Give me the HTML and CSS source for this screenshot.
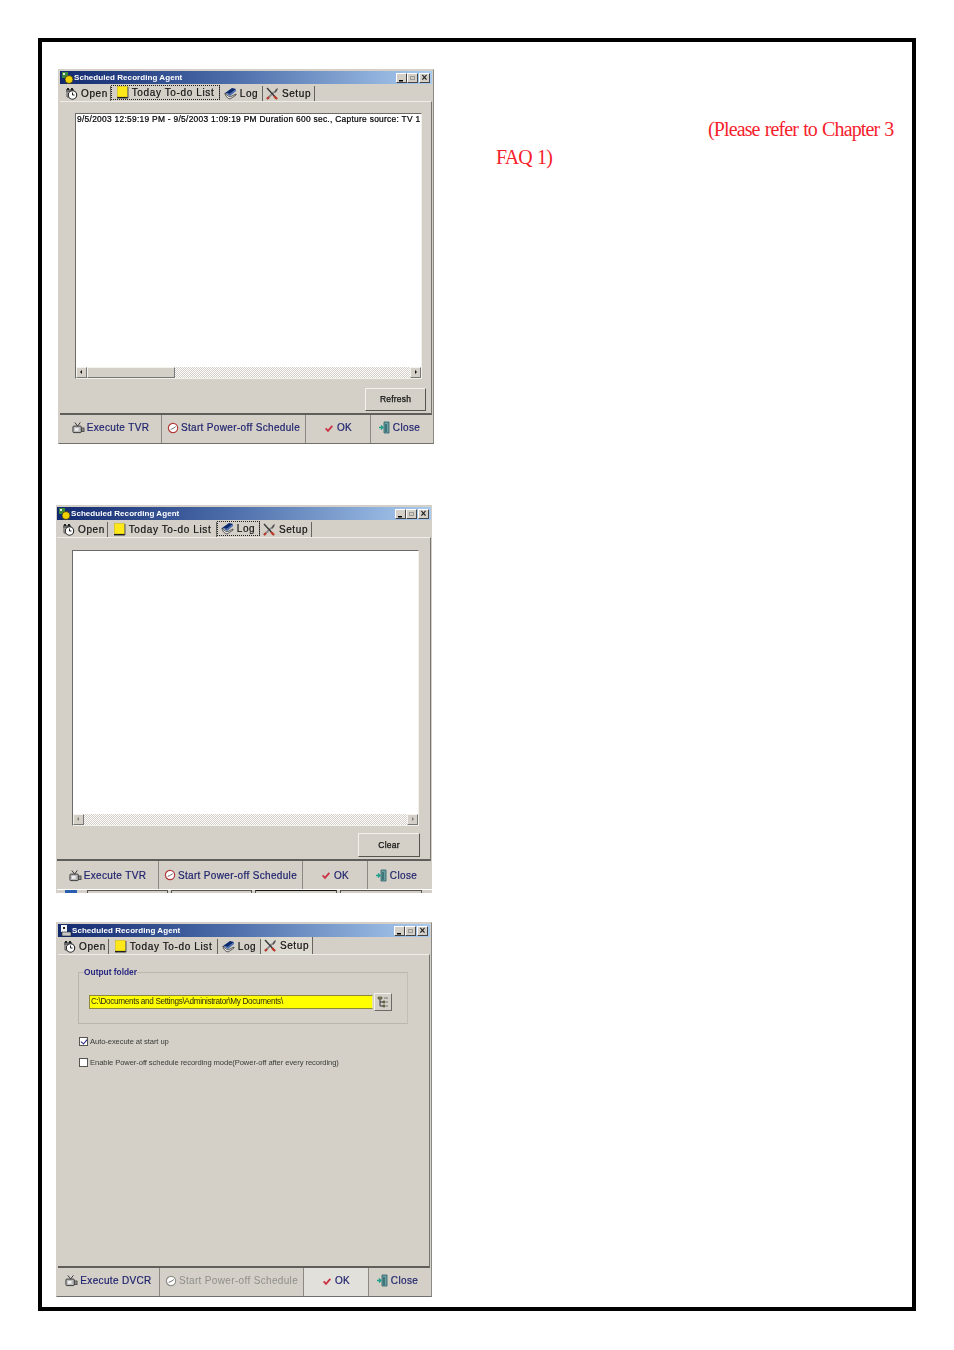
FILE: index.html
```html
<!DOCTYPE html>
<html lang="en">
<head>
<meta charset="utf-8">
<title>Scheduled Recording Agent</title>
<link rel="stylesheet" href="styles.css">
</head>
<body>
<svg class="defs" width="0" height="0" aria-hidden="true">
  <symbol id="i-open" viewBox="0 0 13 13">
    <rect x="1" y="2" width="8" height="3" fill="#6b6b6b"/>
    <path d="M2 1h2v2H2zM6 1h2v2H6z" fill="#222"/>
    <circle cx="7.5" cy="8" r="4.2" fill="#fff" stroke="#222" stroke-width="1.1"/>
    <path d="M7.5 5.5V8h2" fill="none" stroke="#222"/>
    <path d="M2 5v5h2" fill="none" stroke="#555"/>
  </symbol>
  <symbol id="i-todo" viewBox="0 0 13 13">
    <rect x="1.5" y="0.5" width="10" height="10.5" fill="#ffe81a" stroke="#c8b400" stroke-width=".5"/>
    <path d="M1 11.7h11" stroke="#222" stroke-width="1.5"/>
    <path d="M12 1v11" stroke="#555"/>
  </symbol>
  <symbol id="i-log" viewBox="0 0 13 13">
    <path d="M1 6 8 1l4 1-6 5z" fill="#0b2a6e"/>
    <path d="M1 6l5 1 6-5v2L6 9z" fill="#4a6cb0"/>
    <path d="M1 6c0 3 2 5 5 6l6-4v-1l-6 3C4 9 2 8 1 6z" fill="#fff" stroke="#333" stroke-width=".8"/>
  </symbol>
  <symbol id="i-setup" viewBox="0 0 13 13">
    <path d="M1 12 8 5" stroke="#8d8d8d" stroke-width="2"/>
    <path d="M8 5l2-3 2-1-1 3-2 2z" fill="#555"/>
    <path d="M1 1l10 11" stroke="#333" stroke-width="1.3"/>
    <path d="M8 9l3 3" stroke="#c0392b" stroke-width="2.2"/>
    <path d="M1 12l2-2" stroke="#c0392b" stroke-width="2.2"/>
  </symbol>
  <symbol id="i-exec" viewBox="0 0 14 13">
    <rect x="1" y="5" width="9" height="7" rx="1" fill="#bbb" stroke="#333"/>
    <rect x="10" y="7" width="3" height="4" fill="#888" stroke="#333" stroke-width=".7"/>
    <path d="M3 1l3 4 3-4" fill="none" stroke="#333"/>
    <path d="M3 7h4v3H3z" fill="#eee"/>
  </symbol>
  <symbol id="i-clock" viewBox="0 0 13 13">
    <circle cx="6.5" cy="6.5" r="5" fill="#fff" stroke="currentColor" stroke-width="1.3"/>
    <path d="M6.5 7 9.5 5M6.5 7 4 8" fill="none" stroke="#666"/>
  </symbol>
  <symbol id="i-ok" viewBox="0 0 12 12">
    <path d="M2 6.5 4.8 9.5 10 3.5" fill="none" stroke="#cc3344" stroke-width="2.2"/>
  </symbol>
  <symbol id="i-close" viewBox="0 0 13 13">
    <path d="M6 1h5v11H6z" fill="#6aa0a0" stroke="#2b5e6b" stroke-width=".8"/>
    <path d="M8 3v8" stroke="#174a55"/>
    <path d="M1 6.5h4M3 4.5 5 6.5 3 8.5" fill="none" stroke="#1fa08c" stroke-width="1.3"/>
  </symbol>
  <symbol id="i-tree" viewBox="0 0 12 12">
    <path d="M3 3v7h3M3 6h3" fill="none" stroke="#333"/>
    <path d="M1 1h4v2H1zM6 5h2v2H6zM6 9h2v2H6z" fill="#8a8a50" stroke="#333" stroke-width=".5"/>
    <path d="M7 2h4M9 6h2M9 10h2" stroke="#777"/>
  </symbol>
  <symbol id="i-app" viewBox="0 0 12 12">
    <rect x="0" y="0" width="6" height="6" fill="#3a8a3a"/>
    <rect x="1" y="1" width="2" height="2" fill="#e5e5e5"/>
    <circle cx="7" cy="7.5" r="4" fill="#f0d000" stroke="#222" stroke-width=".7"/>
  </symbol>
  <symbol id="i-app2" viewBox="0 0 12 12">
    <rect x="1" y="0" width="6" height="7" fill="#f4f4f4"/>
    <rect x="3" y="2" width="2" height="2" fill="#222"/>
    <rect x="2" y="7" width="9" height="4" fill="#c8c8c8" stroke="#222" stroke-width=".6"/>
  </symbol>
</svg>

<main class="page">
  <div class="shots">
    <section class="window win-todo">
      <header class="title"><svg class="app-icon"><use href="#i-app"/></svg><span class="title-text">Scheduled Recording Agent</span><span class="caps"><i class="cap cap-min"></i><i class="cap cap-max"></i><i class="cap cap-x">×</i></span></header>
      <nav class="tabs">
        <span class="tab tab-open"><svg class="ico"><use href="#i-open"/></svg>Open</span>
        <span class="tab tab-todo is-active"><svg class="ico"><use href="#i-todo"/></svg>Today To-do List</span>
        <span class="tab tab-log"><svg class="ico"><use href="#i-log"/></svg>Log</span>
        <span class="tab tab-setup"><svg class="ico"><use href="#i-setup"/></svg>Setup</span>
      </nav>
      <div class="panel">
        <div class="list">
          <div class="list-body"><span class="row">9/5/2003 12:59:19 PM - 9/5/2003 1:09:19 PM Duration 600 sec., Capture source: TV 1</span></div>
          <div class="hscroll"><b class="arrow arrow-l"></b><b class="thumb"></b><b class="track"></b><b class="arrow arrow-r"></b></div>
        </div>
        <button class="action">Refresh</button>
      </div>
      <footer class="bar">
        <span class="bar-btn b-exec"><svg class="ico"><use href="#i-exec"/></svg>Execute TVR</span>
        <span class="bar-btn b-start"><svg class="ico clock"><use href="#i-clock"/></svg>Start Power-off Schedule</span>
        <span class="bar-btn b-ok"><svg class="ico-ok"><use href="#i-ok"/></svg>OK</span>
        <span class="bar-btn b-close"><svg class="ico"><use href="#i-close"/></svg>Close</span>
      </footer>
    </section>

    <section class="window win-log">
      <header class="title"><svg class="app-icon"><use href="#i-app"/></svg><span class="title-text">Scheduled Recording Agent</span><span class="caps"><i class="cap cap-min"></i><i class="cap cap-max"></i><i class="cap cap-x">×</i></span></header>
      <nav class="tabs">
        <span class="tab tab-open"><svg class="ico"><use href="#i-open"/></svg>Open</span>
        <span class="tab tab-todo"><svg class="ico"><use href="#i-todo"/></svg>Today To-do List</span>
        <span class="tab tab-log is-active"><svg class="ico"><use href="#i-log"/></svg>Log</span>
        <span class="tab tab-setup"><svg class="ico"><use href="#i-setup"/></svg>Setup</span>
      </nav>
      <div class="panel">
        <div class="list">
          <div class="list-body"></div>
          <div class="hscroll is-empty"><b class="arrow arrow-l"></b><b class="track"></b><b class="arrow arrow-r"></b></div>
        </div>
        <button class="action">Clear</button>
      </div>
      <footer class="bar">
        <span class="bar-btn b-exec"><svg class="ico"><use href="#i-exec"/></svg>Execute TVR</span>
        <span class="bar-btn b-start"><svg class="ico clock"><use href="#i-clock"/></svg>Start Power-off Schedule</span>
        <span class="bar-btn b-ok"><svg class="ico-ok"><use href="#i-ok"/></svg>OK</span>
        <span class="bar-btn b-close"><svg class="ico"><use href="#i-close"/></svg>Close</span>
      </footer>
      <div class="taskbar"><i class="start"></i><i class="task t1"></i><i class="task t2"></i><i class="task t3"></i><i class="task t4"></i></div>
    </section>

    <section class="window win-setup">
      <header class="title"><svg class="app-icon"><use href="#i-app2"/></svg><span class="title-text">Scheduled Recording Agent</span><span class="caps"><i class="cap cap-min"></i><i class="cap cap-max"></i><i class="cap cap-x">×</i></span></header>
      <nav class="tabs">
        <span class="tab tab-open"><svg class="ico"><use href="#i-open"/></svg>Open</span>
        <span class="tab tab-todo"><svg class="ico"><use href="#i-todo"/></svg>Today To-do List</span>
        <span class="tab tab-log"><svg class="ico"><use href="#i-log"/></svg>Log</span>
        <span class="tab tab-setup is-open"><svg class="ico"><use href="#i-setup"/></svg>Setup</span>
      </nav>
      <div class="panel panel-setup">
        <fieldset class="group">
          <legend class="group-label">Output folder</legend>
          <div class="path-row">
            <span class="path">C:\Documents and Settings\Administrator\My Documents\</span>
            <span class="browse"><svg class="tree"><use href="#i-tree"/></svg></span>
          </div>
        </fieldset>
        <div class="check check-1"><i class="box is-checked"></i>Auto-execute at start up</div>
        <div class="check check-2"><i class="box"></i>Enable Power-off schedule recording mode(Power-off after every recording)</div>
      </div>
      <footer class="bar">
        <span class="bar-btn b-exec"><svg class="ico"><use href="#i-exec"/></svg>Execute DVCR</span>
        <span class="bar-btn b-start is-disabled"><svg class="ico clock"><use href="#i-clock"/></svg>Start Power-off Schedule</span>
        <span class="bar-btn b-ok is-hot"><svg class="ico-ok"><use href="#i-ok"/></svg>OK</span>
        <span class="bar-btn b-close"><svg class="ico"><use href="#i-close"/></svg>Close</span>
      </footer>
    </section>
  </div>
  <p class="note">(Please refer to Chapter 3 FAQ 1)</p>
</main>
</body>
</html>
```
FILE: styles.css
```css
* { box-sizing: border-box; }
html, body { margin: 0; background: #fff; }
body { width: 954px; height: 1350px; padding: 38px 38px 0; }
.defs { position: absolute; }

.page {
  width: 878px;
  height: 1273px;
  border: 4px solid #000;
  display: flex;
  background: #fff;
}
.shots { width: 454px; flex: none; display: flex; flex-direction: column; }
.note {
  margin: 73px 0 0;
  width: 402px;
  font: 20px/28px "Liberation Serif", serif;
  letter-spacing: -.88px;
  word-spacing: 1px;
  color: #f5222d;
  text-indent: 212px;
}

/* Window shell */
.window {
  width: 376px;
  height: 375px;
  display: flex;
  flex-direction: column;
  background: #d4d0c8;
  border: 1px solid #d4d0c8;
  border-right-color: #8a8a86;
  border-bottom-color: #6f6f6c;
  padding: 1px 0 0 1px;
  font-family: "Liberation Sans", sans-serif;
  filter: blur(.35px);
}
.win-todo { margin: 27px 0 0 16px; }
.win-log { margin: 61px 0 0 14px; height: 388px; border: 0; padding: 2px 0 0 1px; }
.win-setup { margin: 29px 0 0 14px; }

.title {
  height: 13px;
  flex: none;
  display: flex;
  align-items: center;
  padding-left: 2px;
  margin-right: 1px;
  background: linear-gradient(90deg, #13296f 0%, #4a6ba8 45%, #a9cbef 100%);
  color: #fff;
}
.app-icon { width: 12px; height: 12px; flex: none; }
.title-text { font-size: 8px; font-weight: 700; letter-spacing: .06px; white-space: nowrap; }
.caps { margin-left: auto; display: flex; gap: 0; padding-right: 2px; }
.cap {
  width: 11px; height: 10px; margin-left: 1px;
  background: #d4d0c8; border: 1px solid; border-color: #fff #444 #444 #fff;
  font: 700 10px/7px "Liberation Sans", sans-serif; color: #222; text-align: center; position: relative;
}
.cap-min { background: linear-gradient(#000, #000) 2px 6px / 4px 1.5px no-repeat #d4d0c8; }
.cap-max { background: #d4d0c8; box-shadow: inset 0 0 0 2px #d4d0c8, inset 0 0 0 3px #9a9a96; margin-left: 0; }

/* Tabs */
.tabs {
  height: 17px;
  flex: none;
  display: flex;
  align-items: center;
  padding: 1px 0 0 3px;
  font-size: 10px;
  letter-spacing: .62px;
  color: #111;
  -webkit-text-stroke: .2px #111;
}
.tab {
  height: 15px;
  display: flex;
  align-items: center;
  justify-content: center;
  gap: 3px;
  border-right: 1px solid #66645f;
  white-space: nowrap;
}
.tab-open { width: 48px; }
.tab-todo { width: 109px; }
.tab-log { width: 43px; }
.tab-setup { width: 52px; }
.tab.is-active {
  outline: 1px dotted #222;
  outline-offset: -1px;
  margin-top: -1px;
  border-right: 1px solid #66645f;
}
.tab.is-open { background: #dcd9d1; margin-top: -2px; height: 17px; }
.ico { width: 13px; height: 13px; flex: none; }
.ico-ok { width: 10px; height: 10px; flex: none; }

/* Panel */
.panel {
  flex: 1;
  display: flex;
  flex-direction: column;
  align-items: flex-end;
  min-height: 0;
  border-top: 1px solid #efede7;
  border-right: 1px solid #77756f;
  border-bottom: 2px solid #5f5e5a;
  margin-right: 1px;
  padding: 11px 5px 0 15px;
}
.list {
  align-self: flex-start;
  width: 347px;
  height: 266px;
  display: flex;
  flex-direction: column;
  border: 1px solid #6c6a66;
  border-right-color: #f2f0ea;
  border-bottom-color: #f2f0ea;
  background: #fff;
}
.list-body { flex: 1; min-height: 0; overflow: hidden; padding: 0 0 0 1px; }
.row {
  display: block;
  white-space: nowrap;
  font-size: 8.4px;
  line-height: 11px;
  font-weight: 400;
  letter-spacing: .29px;
  color: #000;
  -webkit-text-stroke: .22px #000;
}
.hscroll { height: 11px; flex: none; display: flex; background: #d4d0c8; }
.arrow {
  width: 11px; flex: none; position: relative;
  background: #d4d0c8;
  border: 1px solid; border-color: #f5f3ee #777 #777 #f5f3ee;
}
.arrow::after {
  content: "";
  position: absolute; top: 2px; left: 3px;
  border: 2.5px solid transparent;
}
.arrow-l::after { border-right-color: #111; border-left: 0; }
.arrow-r::after { border-left-color: #111; border-right: 0; left: 4px; }
.is-empty .arrow::after { opacity: .45; }
.thumb { width: 88px; flex: none; background: #d4d0c8; border: 1px solid; border-color: #f5f3ee #777 #777 #f5f3ee; }
.track {
  flex: 1;
  background: repeating-conic-gradient(#d4d0c8 0 25%, #fff 0 50%) 0 0 / 2px 2px;
}
.action {
  margin-top: 9px;
  width: 61px;
  height: 23px;
  padding: 0 0 1px;
  background: #d4d0c8;
  border: 1px solid;
  border-color: #f4f2ec #55544f #55544f #f4f2ec;
  font: 8.5px "Liberation Sans", sans-serif;
  letter-spacing: .2px;
  -webkit-text-stroke: .25px #111;
  color: #111;
}
.win-log .panel { padding-top: 12px; padding-left: 15px; }
.win-log .list { height: 276px; }
.win-log .action { margin-top: 7px; width: 62px; height: 24px; margin-right: 5px; padding-bottom: 0; }

/* Toolbar */
.bar {
  height: 28px;
  flex: none;
  display: flex;
  font-size: 10px;
  letter-spacing: .34px;
  color: #20246e;
  -webkit-text-stroke: .2px #20246e;
}
.bar-btn {
  display: flex;
  align-items: center;
  justify-content: center;
  gap: 2px;
  white-space: nowrap;
  border-right: 1px solid #8a8984;
  height: 100%;
  padding-bottom: 3px;
}
.win-log .bar-btn { padding-bottom: 0; }
.b-exec { width: 102px; }
.b-start { width: 144px; }
.b-ok { width: 65px; gap: 3px; }
.b-close { width: 62px; border-right: 0; padding-right: 6px; }
.clock { color: #b03a3a; width: 12px; height: 12px; }
.is-disabled { color: #8f8e89; -webkit-text-stroke: 0; }
.is-disabled .clock { color: #8f8e89; }
.is-hot { background: #e2e0da; }

.taskbar {
  height: 4px;
  flex: none;
  display: flex;
  gap: 3px;
  padding-left: 8px;
  background: #d4d0c8;
  border-top: 1px solid #fff;
}
.start { display: block; width: 12px; height: 3px; background: #2a5fb0; margin-right: 7px; }
.task { display: block; height: 3px; border: 1px solid #55544f; border-bottom: 0; }
.t1 { width: 81px; }
.t2 { width: 81px; }
.t3 { width: 82px; border-top-color: #111; }
.t4 { width: 82px; }

/* Setup */
.panel-setup { display: block; padding: 12px 0 0 20px; }
.group {
  width: 330px;
  height: 57px;
  margin: 0;
  min-width: 0;
  padding: 16px 14px 0 10px;
  border: 1px solid #b9b6ae;
  border-right-color: #c2bfb7;
}
.group-label {
  padding: 0;
  margin-left: -5px;
  font-size: 8.4px;
  line-height: 11px;
  font-weight: 700;
  color: #27277e;
}
.path-row { display: flex; align-items: center; gap: 1px; margin-top: -1px; }
.path {
  width: 284px;
  height: 14px;
  background: #ffff00;
  border: 1px solid #8c8a3a;
  border-right-color: #e6e6a0;
  font-size: 8.2px;
  line-height: 12px;
  letter-spacing: -.33px;
  padding-left: 1px;
  color: #2c2c10;
  white-space: nowrap;
  overflow: hidden;
}
.browse {
  width: 18px; height: 18px; flex: none;
  display: flex; align-items: center; justify-content: center;
  background: #d4d0c8;
  border: 1px solid; border-color: #f4f2ec #6c6a66 #6c6a66 #f4f2ec;
}
.tree { width: 12px; height: 12px; }
.check {
  display: flex;
  align-items: center;
  gap: 2px;
  margin-left: 1px;
  font-size: 7.6px;
  line-height: 9px;
  letter-spacing: -.08px;
  color: #3a3a38;
  white-space: nowrap;
}
.check-1 { margin-top: 13px; }
.check-2 { margin-top: 12px; }
.box {
  width: 9px; height: 9px; flex: none;
  background: #fff;
  border: 1px solid #55544f;
  position: relative;
}
.is-checked::after {
  content: "";
  position: absolute; left: 2px; top: 0;
  width: 3px; height: 5px;
  border: solid #27277e; border-width: 0 1.2px 1.2px 0;
  transform: rotate(40deg);
}
```
